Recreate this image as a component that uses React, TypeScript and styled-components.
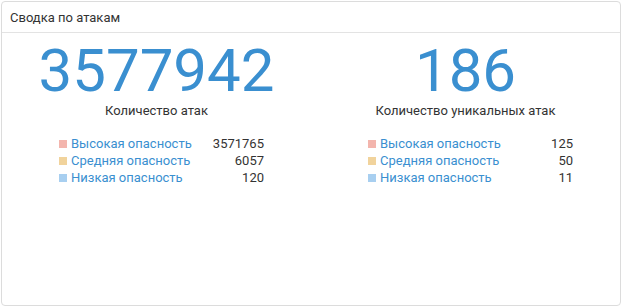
import React from 'react';
import styled, { createGlobalStyle } from 'styled-components';

const GlobalStyle = createGlobalStyle`
  html, body {
    margin: 0;
    padding: 0;
    background: #fff;
  }
  body {
    font-family: Roboto, 'Liberation Sans', sans-serif;
    color: #333;
  }
`;

const Page = styled.div`
  padding: 1px;
  width: 622px;
  height: 307px;
  box-sizing: border-box;
`;

const Card = styled.div`
  box-sizing: border-box;
  width: 620px;
  height: 305px;
  border: 1px solid #dcdcdc;
  border-radius: 4px;
  display: flex;
  flex-direction: column;
  background: #fff;
`;

const Header = styled.div`
  height: 31px;
  box-sizing: border-box;
  border-bottom: 1px solid #e3e3e3;
  padding: 0 8px;
  display: flex;
  align-items: center;
  font-size: 13px;
  color: #333;
`;

const Body = styled.div`
  display: flex;
  flex: 1;
`;

const Column = styled.div`
  flex: 1;
  display: flex;
  flex-direction: column;
  padding-top: 7px;
`;

const BigNumber = styled.div`
  font-size: 60px;
  line-height: 62px;
  color: #3a8fd0;
  text-align: center;
`;

const Caption = styled.div`
  margin-top: 2px;
  font-size: 13px;
  line-height: 13px;
  text-align: center;
  color: #333;
`;

const Legend = styled.div`
  margin: 18px 0 0 57px;
  width: 205px;
  display: flex;
  flex-direction: column;
`;

const Row = styled.div`
  display: flex;
  align-items: center;
  font-size: 13px;
  line-height: 17px;
`;

const Swatch = styled.span<{ $color: string }>`
  width: 8px;
  height: 8px;
  background: ${(p) => p.$color};
  margin-right: 4px;
  flex: none;
`;

const Label = styled.span`
  color: #3a8fd0;
  flex: 1;
`;

const Value = styled.span`
  color: #333;
  text-align: right;
`;

const levels = [
  { name: 'Высокая опасность', color: '#f3b5ad' },
  { name: 'Средняя опасность', color: '#f1d39c' },
  { name: 'Низкая опасность', color: '#a8cff0' },
];

const blocks = [
  { total: '3577942', caption: 'Количество атак', values: ['3571765', '6057', '120'] },
  { total: '186', caption: 'Количество уникальных атак', values: ['125', '50', '11'] },
];

const App = () => (
  <>
    <GlobalStyle />
    <Page>
      <Card>
        <Header>Сводка по атакам</Header>
        <Body>
          {blocks.map((b) => (
            <Column key={b.caption}>
              <BigNumber>{b.total}</BigNumber>
              <Caption>{b.caption}</Caption>
              <Legend>
                {levels.map((l, i) => (
                  <Row key={l.name}>
                    <Swatch $color={l.color} />
                    <Label>{l.name}</Label>
                    <Value>{b.values[i]}</Value>
                  </Row>
                ))}
              </Legend>
            </Column>
          ))}
        </Body>
      </Card>
    </Page>
  </>
);

export default App;
